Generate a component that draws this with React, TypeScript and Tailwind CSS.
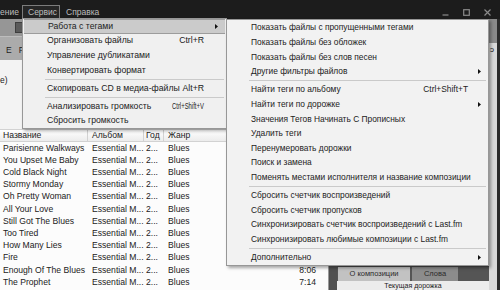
import React from "react"

const tracks = [
    { name: "Parisienne Walkways", time: "" },
    { name: "You Upset Me Baby", time: "" },
    { name: "Cold Black Night", time: "" },
    { name: "Stormy Monday", time: "" },
    { name: "Oh Pretty Woman", time: "" },
    { name: "All Your Love", time: "" },
    { name: "Still Got The Blues", time: "" },
    { name: "Too Tired", time: "" },
    { name: "How Many Lies", time: "" },
    { name: "Fire", time: "" },
    { name: "Enough Of The Blues", time: "8:06" },
    { name: "The Prophet", time: "7:14" },
]

type Entry = { label?: string, shortcut?: string, narrow?: boolean, sub?: boolean, active?: boolean, sep?: boolean }

const mainItems: Entry[] = [
    { label: "Работа с тегами", sub: true, active: true },
    { label: "Организовать файлы", shortcut: "Ctrl+R" },
    { label: "Управление дубликатами" },
    { label: "Конвертировать формат" },
    { sep: true },
    { label: "Скопировать CD в медиа-файлы", shortcut: "Alt+R" },
    { sep: true },
    { label: "Анализировать громкость", shortcut: "Ctrl+Shift+V", narrow: true },
    { label: "Сбросить громкость" },
]

const tagItems: Entry[] = [
    { label: "Показать файлы с пропущенными тегами" },
    { label: "Показать файлы без обложек" },
    { label: "Показать файлы без слов песен" },
    { label: "Другие фильтры файлов", sub: true },
    { sep: true },
    { label: "Найти теги по альбому", shortcut: "Ctrl+Shift+T" },
    { label: "Найти теги по дорожке", sub: true },
    { label: "Значения Тегов Начинать С Прописных" },
    { label: "Удалить теги" },
    { label: "Перенумеровать дорожки" },
    { label: "Поиск и замена" },
    { label: "Поменять местами исполнителя и название композиции" },
    { sep: true },
    { label: "Сбросить счетчик воспроизведений" },
    { label: "Сбросить счетчик пропусков" },
    { label: "Синхронизировать счетчик воспроизведений с Last.fm" },
    { label: "Синхронизировать любимые композиции с Last.fm" },
    { sep: true },
    { label: "Дополнительно", sub: true },
]

function Arrow() {
    return <svg width="3" height="5" viewBox="0 0 3 5"><path d="M0 0 L3 2.5 L0 5 Z" fill="#111" /></svg>
}

function MenuRows({ items, slot }: { items: Entry[], slot: string }) {
    return <>
        {items.map((it, i) => it.sep
            ? <div key={i} className="h-[3.5px] flex flex-col justify-center ml-[22px] mr-[2px]">
                <div className="h-px bg-[#cacaca]" />
            </div>
            : <div key={i} className={`h-[14.6px] flex items-center pl-[24px] pr-[7px] whitespace-nowrap ${it.active ? "bg-[#cbcbcb] border-y border-[#9c9c9c] mx-[1px] pl-[23px]" : ""}`}>
                <span className="flex-1">{it.label}</span>
                {it.shortcut && <span className={it.narrow ? "inline-block scale-x-[0.68] origin-right" : ""}>{it.shortcut}</span>}
                <span className={`${slot} flex justify-end items-center`}>{it.sub && <Arrow />}</span>
            </div>
        )}
    </>
}

function TitleBar() {
    return <div className="h-[19px] bg-[#1c1c1c] flex items-end text-[8.5px] text-[#bdbdbd] relative">
        <span className="w-[22px] leading-[12px] mb-[1px] overflow-hidden whitespace-nowrap">ение</span>
        <span className="w-[38px] h-[14px] border-x border-t border-[#7c7c7c] bg-[#262626] pl-[5px] leading-[13px]">Сервис</span>
        <span className="ml-[6px] leading-[12px] mb-[1px]">Справка</span>
        <div className="ml-auto mr-[9px] mb-[3px] flex items-end gap-[14px] text-[#8a8a8a]">
            <svg width="7" height="7" viewBox="0 0 7 7"><path d="M0.5 6 H6.5" stroke="currentColor" strokeWidth="1.2" /></svg>
            <svg width="7" height="7" viewBox="0 0 7 7"><rect x="0.7" y="0.7" width="5.6" height="5.6" fill="none" stroke="currentColor" strokeWidth="1.2" /></svg>
            <svg width="7" height="7" viewBox="0 0 7 7"><path d="M0.5 0.5 L6.5 6.5 M6.5 0.5 L0.5 6.5" stroke="currentColor" strokeWidth="1.2" /></svg>
        </div>
    </div>
}

export default function App() {
    return <div className="relative w-[500px] h-[290px] overflow-hidden bg-[#1c1c1c] text-[#222] font-['Liberation_Sans',Arial,sans-serif]">
        <TitleBar />
        <div className="flex h-[271px]">
            {/* library column */}
            <div className="w-[337px] flex flex-col bg-[#f6f6f6]">
                <div className="h-[18px] bg-[#969696] flex items-center border-b border-[#bdbdbd]">
                    <div className="ml-[15px] w-[12px] h-[11px] bg-[#5a5a5a] border border-[#3e3e3e]" />
                </div>
                <div className="h-[23px] bg-[#ababab] flex items-center text-[8.5px] text-[#222] pt-[4px]">
                    <span className="ml-[6px]">E</span>
                    <span className="ml-[7px]">F</span>
                </div>
                <div className="h-[69px] bg-[#f3f3f3] text-[8.5px] pt-[14px]">е)</div>
                <div className="flex-1 flex min-h-0">
                    <div className="w-[328px] bg-[#fcfcfc] text-[8.6px] overflow-hidden">
                        <div className="h-[13px] flex bg-gradient-to-b from-[#ffffff] to-[#ececec] border-y border-[#d2d2d2] leading-[11px]">
                            <div className="w-[88px] pl-[3px] border-r border-[#d2d2d2]">Название</div>
                            <div className="w-[56px] pl-[4px] border-r border-[#d2d2d2]">Альбом</div>
                            <div className="w-[20px] pl-[2px] border-r border-[#d2d2d2]">Год</div>
                            <div className="pl-[4px]">Жанр</div>
                        </div>
                        {tracks.map(t => <div key={t.name} className="h-[12.2px] flex items-center whitespace-nowrap">
                            <div className="w-[88px] pl-[3px]">{t.name}</div>
                            <div className="w-[56px] pl-[4px] overflow-hidden">Essential M...</div>
                            <div className="w-[20px] pl-[2px]">2...</div>
                            <div className="w-[54px] pl-[4px]">Blues</div>
                            <div className="flex-1 text-right pr-[12px]">{t.time}</div>
                        </div>)}
                    </div>
                    <div className="w-[9px] bg-[#505050] border-l border-[#9a9a9a]" />
                </div>
            </div>
            {/* right panel */}
            <div className="flex-1 flex flex-col bg-[#f3f3f3]">
                <div className="flex-1" />
                <div className="h-[27px] flex flex-col bg-[#555]">
                    <div className="h-[5px] bg-[#474747]" />
                    <div className="h-[14px] flex items-stretch text-[7.5px] leading-[14px] text-[#2a2a2a]">
                        <div className="ml-[1px] w-[72px] bg-[#c2c2c2] text-center">О композиции</div>
                        <div className="ml-[2px] w-[46px] bg-[#8c8c8c] text-center">Слова</div>
                    </div>
                    <div className="flex-1 bg-[#ececec] text-[7px] leading-[9px] text-center text-[#222]">Текущая дорожка</div>
                </div>
            </div>
            <div className="w-[8px] flex flex-col bg-[#d9d9d9]">
                <div className="h-[24px] bg-[#8a8a8a]" />
                <div className="text-[8px] pl-[1px] pt-[1px]">ↄ</div>
            </div>
            <div className="w-[3px] bg-[#2b2b2b]" />
        </div>

        {/* Сервис menu */}
        <div className="absolute left-[22px] top-[18px] w-[205px] bg-[#f0f0f0] border border-[#979797] text-[8.7px] shadow-[2px_2px_3px_rgba(0,0,0,0.3)]">
            <MenuRows items={mainItems} slot="w-[15px]" />
        </div>

        {/* tags submenu */}
        <div className="absolute left-[226px] top-[19px] w-[263px] bg-[#f2f2f2] border border-[#979797] py-[0.5px] text-[8.4px] shadow-[2px_2px_3px_rgba(0,0,0,0.35)]">
            <MenuRows items={tagItems} slot="w-[13px]" />
        </div>
    </div>
}
